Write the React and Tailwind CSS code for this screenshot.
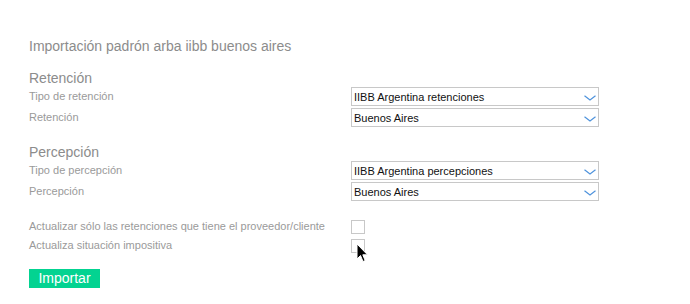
import React from "react";

function Chevron() {
  return (
    <svg width="12" height="6" viewBox="0 0 12 6" className="absolute right-[2px] top-[7px]">
      <path d="M0.5 0.8 L6 5 L11.5 0.8" fill="none" stroke="#4f93dc" strokeWidth="1.2" />
    </svg>
  );
}

function Select({ value }) {
  return (
    <div className="relative h-[19px] w-[248px] border border-[#c8c8c8] bg-white pl-[2px] text-[11px] leading-[18px] text-[#111]">
      {value}
      <Chevron />
    </div>
  );
}

function Row({ label, value }) {
  return (
    <div className="grid h-[19px] grid-cols-[322px_248px] items-center">
      <div className="text-[11px] leading-[19px] text-[#9a9a9a]">{label}</div>
      <Select value={value} />
    </div>
  );
}

function CheckRow({ label }) {
  return (
    <div className="grid h-[19px] grid-cols-[322px_248px] items-center">
      <div className="text-[11px] leading-[19px] text-[#9a9a9a]">{label}</div>
      <div className="h-[14px] w-[14px] border border-[#c8c8c8] bg-white" />
    </div>
  );
}

export default function App() {
  return (
    <div
      className="relative h-[304px] w-[690px] bg-white px-[29px] pt-[37px]"
      style={{ fontFamily: '"Liberation Sans", Arial, sans-serif' }}
    >
      <div className="h-[18px] text-[14px] leading-[18px] text-[#8c8c8c]">
        Importación padrón arba iibb buenos aires
      </div>
      <div className="mt-[14px] h-[18px] text-[14px] leading-[18px] text-[#8c8c8c]">Retención</div>
      <div className="flex flex-col gap-[2px]">
        <Row label="Tipo de retención" value="IIBB Argentina retenciones" />
        <Row label="Retención" value="Buenos Aires" />
      </div>
      <div className="mt-[16px] h-[18px] text-[14px] leading-[18px] text-[#8c8c8c]">Percepción</div>
      <div className="flex flex-col gap-[2px]">
        <Row label="Tipo de percepción" value="IIBB Argentina percepciones" />
        <Row label="Percepción" value="Buenos Aires" />
      </div>
      <div className="mt-[16px] flex flex-col">
        <CheckRow label="Actualizar sólo las retenciones que tiene el proveedor/cliente" />
        <CheckRow label="Actualiza situación impositiva" />
      </div>
      <button className="mt-[14px] h-[19px] w-[71px] bg-[#03d391] text-[14px] leading-[19px] text-white">
        Importar
      </button>
      <svg
        width="13"
        height="20"
        viewBox="0 0 13 20"
        className="absolute left-[356px] top-[243px]"
      >
        <path
          d="M1 1 L1 16 L4.5 12.5 L7 18.5 L9.2 17.6 L6.8 11.8 L11.5 11.8 Z"
          fill="#000"
          stroke="#fff"
          strokeWidth="1"
          strokeLinejoin="round"
        />
      </svg>
    </div>
  );
}
